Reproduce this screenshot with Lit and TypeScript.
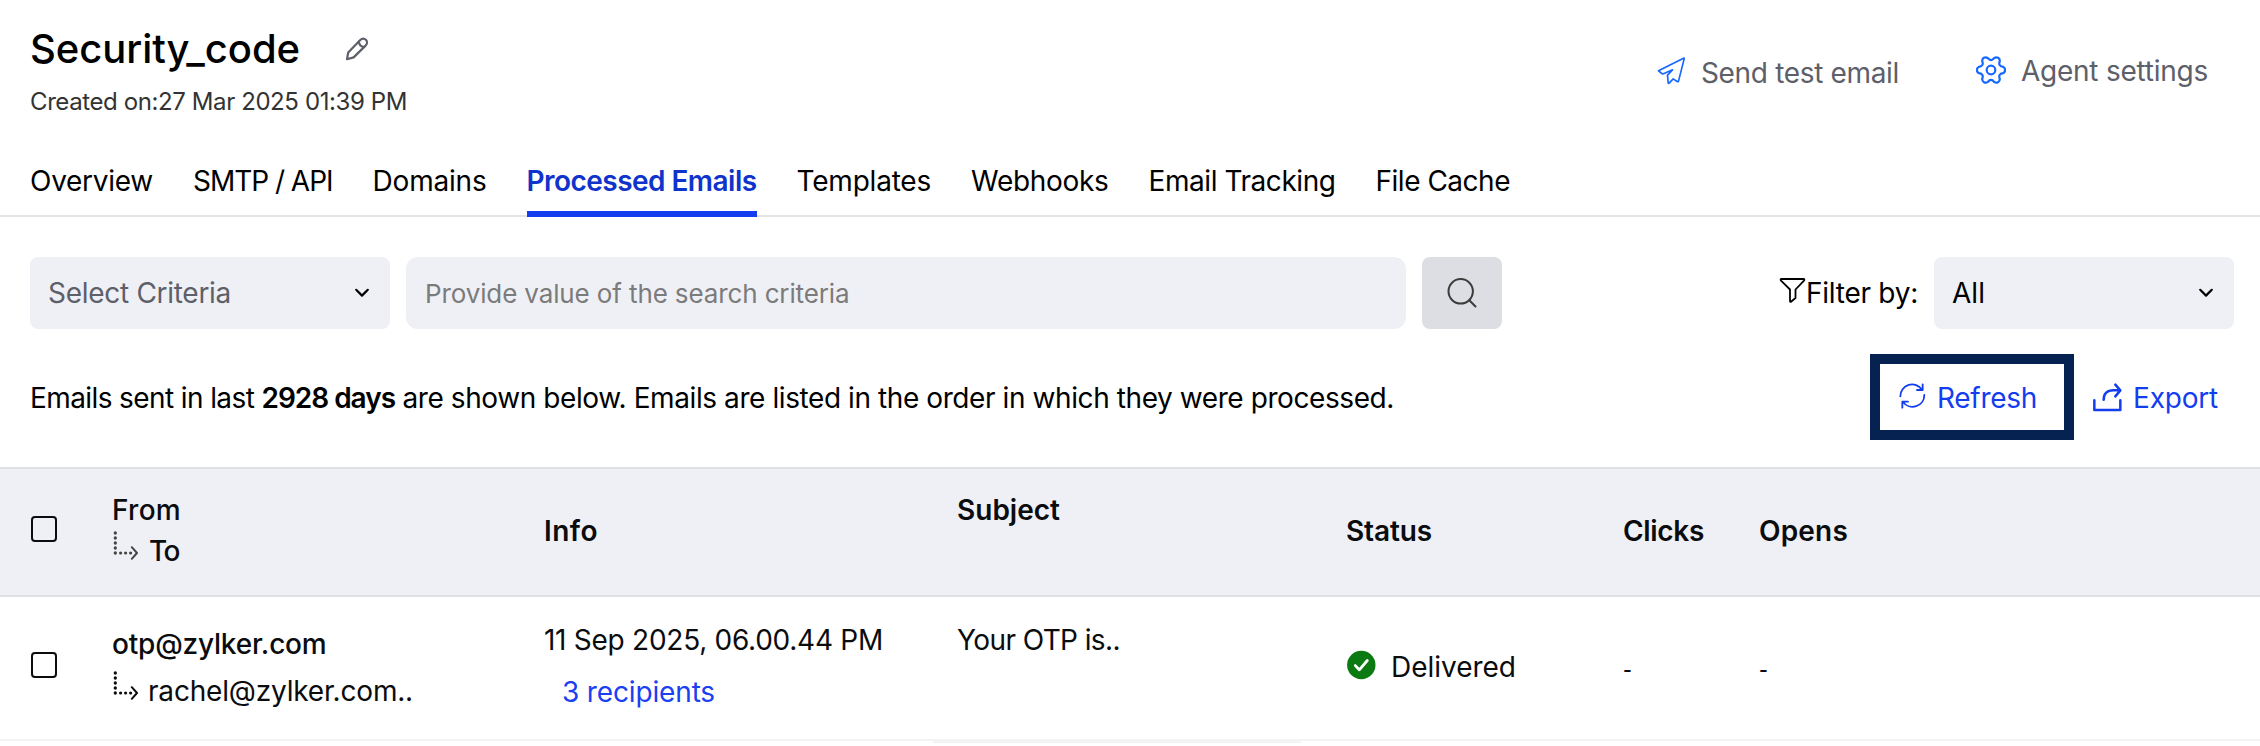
import { LitElement, html, css, svg } from "lit";
import { customElement } from "lit/decorators.js";
import { styleMap } from "lit/directives/style-map.js";

const ctx = document.createElement("canvas").getContext("2d")!;

/** Text run whose tracking is derived from its intended width. */
const run = (text: string, width: number, size = 28, weight = 400) => {
  ctx.font = `${weight} ${size}px Inter`;
  const spacing = (width - ctx.measureText(text).width) / text.length;
  return html`<span
    class="run"
    style=${styleMap({ letterSpacing: `${spacing.toFixed(3)}px`, fontSize: `${size}px`, fontWeight: `${weight}` })}
    >${text}</span
  >`;
};

const gearPath = (() => {
  const at = (r: number, deg: number) => {
    const a = (deg * Math.PI) / 180;
    return `${(15 + r * Math.cos(a)).toFixed(2)} ${(15 + r * Math.sin(a)).toFixed(2)}`;
  };
  let d = `M${at(12.4, -15)}`;
  for (let k = 0; k < 6; k++) {
    const a = k * 60;
    d += `A3.5 3.5 0 0 1 ${at(12.4, a + 15)}Q${at(7.9, a + 30)} ${at(12.4, a + 45)}`;
  }
  return d + "Z";
})();

const tabs: { name: string; width: number; active?: boolean }[] = [
  { name: "Overview", width: 123 },
  { name: "SMTP / API", width: 139.5 },
  { name: "Domains", width: 114 },
  { name: "Processed Emails", width: 230, active: true },
  { name: "Templates", width: 134.5 },
  { name: "Webhooks", width: 137.5 },
  { name: "Email Tracking", width: 187 },
  { name: "File Cache", width: 134.5 },
];

const chevron = html`<svg class="chevron" width="16" height="10" viewBox="0 0 16 10">
  <path d="M2.2 1.8L8 7.6L13.8 1.8" />
</svg>`;

const elbow = html`<svg class="elbow" width="26" height="30" viewBox="0 0 26 30">
  ${[3, 8, 13, 18, 23].map((y) => svg`<circle cx="3.3" cy=${y} r="1.65" />`)}
  ${[8.6, 13.6, 18.6].map((x) => svg`<circle cx=${x} cy="23" r="1.6" />`)}
  <path d="M19.8 17.2L25 23L19.8 28.8" />
</svg>`;

const checkbox = html`<span class="checkbox"></span>`;

@customElement("app-root")
export class AppRoot extends LitElement {
  static styles = css`
    :host {
      display: block;
      height: 746px;
      overflow: hidden;
      background: #fff;
      color: #000;
      font-family: Inter, sans-serif;
      font-size: 28px;
      line-height: 34px;
    }
    * { box-sizing: border-box; }
    svg { display: block; flex: none; fill: none; stroke-linecap: round; stroke-linejoin: round; }
    .run { white-space: pre; }
    .header { display: flex; height: 164px; padding: 24px 52px 0 30px; }
    .title { display: flex; height: 48px; line-height: 50px; margin-bottom: 14px; }
    .pencil { margin: 12px 0 0 45px; stroke: #5d6069; stroke-width: 2.2; }
    .created { line-height: 29px; color: #333; }
    .actions { display: flex; margin-left: auto; color: #5d6069; }
    .action { display: flex; align-items: flex-start; }
    .action.send { margin: 32px 77px 0 0; gap: 15px; }
    .action.agent { margin-top: 30px; gap: 15px; }
    .blue { stroke: #1768ff; }
    .tabs { display: flex; gap: 40px; height: 53px; padding-left: 30px; border-bottom: 2px solid #e4e4e4; }
    .tab { height: 53px; white-space: nowrap; }
    .tab.active { color: #0f34cc; border-bottom: 6px solid #143df0; }
    .filters { display: flex; height: 112px; padding: 40px 26px 0 30px; }
    .box { display: flex; align-items: center; height: 72px; border-radius: 8px; background: #eff0f6; }
    .criteria { width: 360px; padding: 0 20px 0 18px; color: #5d6069; justify-content: space-between; }
    .search { width: 1000px; margin-left: 16px; padding: 1px 0 0 19px; border-radius: 12px; color: #7b7b7b; }
    .go { width: 80px; margin-left: 16px; justify-content: center; background: #dddee3; }
    .go svg { stroke: #3c3c3c; stroke-width: 2; }
    .filter { display: flex; align-items: center; margin-left: auto; margin-right: 16px; }
    .funnel { margin: -4px 0 0; stroke: #000; stroke-width: 1.8; }
    .status { width: 300px; padding: 0 20px 0 18px; justify-content: space-between; }
    .chevron { stroke: #000; stroke-width: 2.2; }
    .summary { display: flex; height: 138px; padding: 25px 42px 0 30px; }
    .text { padding-top: 27px; white-space: pre; }
    .refresh { display: flex; width: 204px; height: 86px; margin-left: auto; padding: 17px 0 0 18px; gap: 11px; border: 10px solid #052250; color: #143df0; }
    .export { display: flex; margin-left: 19px; padding-top: 27px; gap: 10px; color: #143df0; }
    .line { stroke: #143df0; }
    .row { display: grid; grid-template-columns: 82px 432px 413px 389px 277px 136px 1fr; padding-left: 30px; color: #0b0c0e; }
    .head { height: 130px; background: #eff0f6; border-top: 2px solid #e0e1e4; border-bottom: 2px solid #e0e1e4; }
    .body { height: 144px; border-bottom: 2px solid #f3f3f3; }
    .checkbox { display: block; width: 26px; height: 26px; margin-left: 1px; border: 2px solid #0b0c0e; border-radius: 4px; }
    .head .checkbox { margin-top: 47px; }
    .body .checkbox { margin-top: 55px; }
    .elbow { stroke: currentColor; stroke-width: 2; }
    .elbow circle { fill: currentColor; stroke: none; }
    .from, .info { display: flex; flex-direction: column; }
    .head .from { padding-top: 24px; gap: 7px; }
    .body .from { padding-top: 30px; gap: 13px; }
    .to { display: flex; }
    .head .to { gap: 11px; }
    .head .elbow { margin-top: -4px; color: #444; }
    .body .to { gap: 10px; }
    .body .elbow { margin-top: -4px; }
    .top { padding-top: 24px; }
    .middle { padding-top: 45px; }
    .body .info { padding-top: 26px; gap: 18px; }
    .recipients { padding-left: 18px; color: #1a40f2; }
    .body .subject { padding-top: 26px; }
    .body .value { padding-top: 53px; }
    .delivered { display: flex; gap: 15px; }
    .scroll { width: 368px; height: 2px; margin-left: 933px; background: #f3f3f3; }
  `;

  render() {
    return html`
      <header class="header">
        <div>
          <div class="title">
            ${run("Security_code", 270, 40, 500)}
            <svg class="pencil" width="26" height="26" viewBox="16 16 26 26">
              <path d="M18 39.2L19.2 32.6L31 20.2C33 18.2 35.4 18.4 36.9 19.8C38.4 21.3 38.3 23.8 36.6 25.6L24.6 37.4Z" />
              <path d="M29.8 21.6C30.2 24.8 32 26.7 35.1 27" />
            </svg>
          </div>
          <div class="created">${run("Created on:27 Mar 2025 01:39 PM", 377, 24)}</div>
        </div>
        <div class="actions">
          <div class="action send">
            <svg class="blue" width="29" height="29" viewBox="50.500 53.500 87 87" stroke-width="5">
              <path d="M55 98L130 60Q132.500 59 132 62L115 129Q114 132 111 130L99 122L87 135Q84 137 84 133L82 111L97 95L70 107Q67 108 65 106Z" />
            </svg>
            ${run("Send test email", 198)}
          </div>
          <div class="action agent">
            <svg class="blue" width="30" height="30" viewBox="0 -1 30 30" stroke-width="2.2">
              <path d=${gearPath} /><circle cx="15" cy="15" r="4.300" />
            </svg>
            ${run("Agent settings", 187)}
          </div>
        </div>
      </header>

      <nav class="tabs">
        ${tabs.map((t) => html`<div class="tab ${t.active ? "active" : ""}">${run(t.name, t.width, 28, t.active ? 600 : 400)}</div>`)}
      </nav>

      <section class="filters">
        <div class="box criteria">${run("Select Criteria", 183)}${chevron}</div>
        <div class="box search">${run("Provide value of the search criteria", 424.5, 26)}</div>
        <div class="box go">
          <svg width="32" height="32" viewBox="0 0 32 32"><circle cx="14.700" cy="14.300" r="12.200" /><path d="M23.300 23.200L29.500 29.500" /></svg>
        </div>
        <div class="filter">
          <svg class="funnel" width="27" height="28" viewBox="0 0 27 28">
            <path d="M2.500 2H24.500Q26 2.200 25 3.600L16.500 12.500V21L12 24.800Q11 25 11 24V12.500L2 3.600Q1 2.200 2.500 2Z" />
          </svg>
          ${run("Filter by:", 112)}
        </div>
        <div class="box status">${run("All", 33)}${chevron}</div>
      </section>

      <section class="summary">
        <div class="text">${run("Emails sent in last ", 231.5)}${run("2928 days", 133.5, 28, 600)}${run(" are shown below. Emails are listed in the order in which they were processed.", 999)}</div>
        <div class="refresh">
          <svg class="line" width="28" height="28" viewBox="474 428 84 84" stroke-width="5.500">
            <path d="M481 474A35.500 35.500 0 0 1 546 454M548 438V455H531M553 470A35.500 35.500 0 0 1 489 491M487 508V490H504" />
          </svg>
          ${run("Refresh", 100)}
        </div>
        <div class="export">
          <svg class="line" width="30" height="32" viewBox="1059 424 90 96" stroke-width="7.500">
            <path d="M1063 482V511H1141V482M1091 480C1091 462 1102 452 1120 452H1140M1126 435L1141 452L1126 470" />
          </svg>
          ${run("Export", 85)}
        </div>
      </section>

      <div class="row head">
        <div>${checkbox}</div>
        <div class="from">
          ${run("From", 69, 28, 500)}
          <div class="to">${elbow}${run("To", 30, 28, 500)}</div>
        </div>
        <div class="middle">${run("Info", 54, 28, 600)}</div>
        <div class="top">${run("Subject", 103, 28, 600)}</div>
        <div class="middle">${run("Status", 86, 28, 600)}</div>
        <div class="middle">${run("Clicks", 81, 28, 600)}</div>
        <div class="middle">${run("Opens", 89, 28, 600)}</div>
      </div>

      <div class="row body">
        <div>${checkbox}</div>
        <div class="from">
          ${run("otp@zylker.com", 214.5, 28, 500)}
          <div class="to">${elbow}${run("rachel@zylker.com..", 265)}</div>
        </div>
        <div class="info">
          ${run("11 Sep 2025, 06.00.44 PM", 339)}
          <div class="recipients">${run("3 recipients", 153)}</div>
        </div>
        <div class="subject">${run("Your OTP is..", 163)}</div>
        <div class="value delivered">
          <svg width="30" height="30" viewBox="0 0 30 30">
            <circle cx="15.300" cy="15" r="14.200" fill="#0b7a10" />
            <path d="M9.300 15.600L13.300 19.800L21.300 10.500" stroke="#fff" stroke-width="2.800" />
          </svg>
          ${run("Delivered", 125)}
        </div>
        <div class="value">${run("-", 10, 19, 600)}</div>
        <div class="value">${run("-", 10, 19, 600)}</div>
      </div>
      <div class="scroll"></div>
    `;
  }
}
